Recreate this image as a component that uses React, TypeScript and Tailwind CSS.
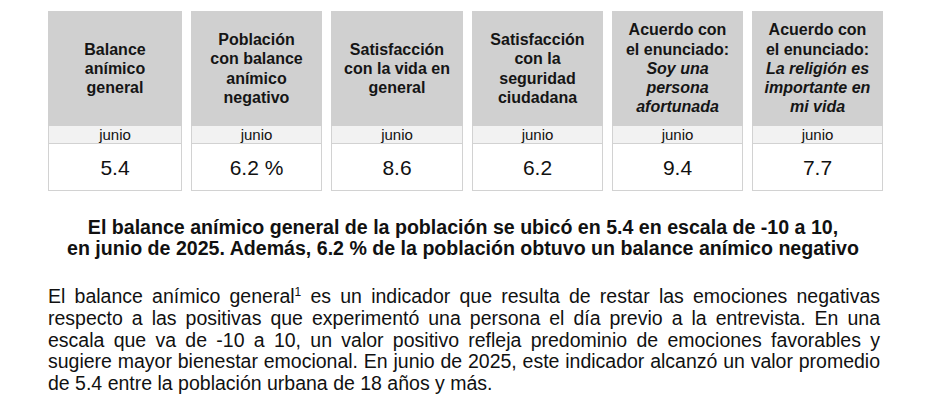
import React from "react";

type Card = { w: string; title: React.ReactNode; value: string };

const cards: Card[] = [
  { w: "w-[134px]", title: <>Balance<br />anímico<br />general</>, value: "5.4" },
  { w: "w-[131px]", title: <>Población<br />con balance<br />anímico<br />negativo</>, value: "6.2 %" },
  { w: "w-[132px]", title: <>Satisfacción<br />con la vida en<br />general</>, value: "8.6" },
  { w: "w-[131px]", title: <>Satisfacción<br />con la<br />seguridad<br />ciudadana</>, value: "6.2" },
  {
    w: "w-[131px]",
    title: <>Acuerdo con<br />el enunciado:<br /><i>Soy una<br />persona<br />afortunada</i></>,
    value: "9.4",
  },
  {
    w: "w-[131px]",
    title: <>Acuerdo con<br />el enunciado:<br /><i>La religión es<br />importante en<br />mi vida</i></>,
    value: "7.7",
  },
];

export default function App() {
  return (
    <div className="w-[926px] h-[417px] bg-white overflow-hidden text-[#111] [font-family:'Liberation_Sans',Arial,sans-serif]">
      <div className="flex gap-[9px] pl-[48px] pt-[11px]">
        {cards.map((c, i) => (
          <div key={i} className={`${c.w} flex flex-col`}>
            <div className="h-[115px] bg-[#d0d0d0] flex items-center justify-center text-center font-bold text-[16px] leading-[19.2px] text-[#151515]">
              <div>{c.title}</div>
            </div>
            <div className="border border-t-0 border-[#d2d2d2]">
              <div className="h-[18px] bg-[#f2f2f2] border-b border-[#d2d2d2] flex items-center justify-center text-[15px] leading-none">
                junio
              </div>
              <div className="h-[46px] flex items-center justify-center text-[21px] leading-none">
                {c.value}
              </div>
            </div>
          </div>
        ))}
      </div>

      <div className="mt-[26px] text-center font-bold text-[19.6px] leading-[21px]">
        El balance anímico general de la población se ubicó en 5.4 en escala de -10 a 10,
        <br />
        en junio de 2025. Además, 6.2 % de la población obtuvo un balance anímico negativo
      </div>

      <div className="mt-[27px] ml-[48px] w-[832px] text-[19.5px] leading-[21.75px]">
        <div className="text-justify [text-align-last:justify]">
          El balance anímico general<sup className="text-[12px] -top-[7px]">1</sup> es un indicador que resulta de restar las emociones negativas
        </div>
        <div className="text-justify [text-align-last:justify]">
          respecto a las positivas que experimentó una persona el día previo a la entrevista. En una
        </div>
        <div className="text-justify [text-align-last:justify]">
          escala que va de -10 a 10, un valor positivo refleja predominio de emociones favorables y
        </div>
        <div className="text-justify [text-align-last:justify] whitespace-nowrap">
          sugiere mayor bienestar emocional. En junio de 2025, este indicador alcanzó un valor promedio
        </div>
        <div>de 5.4 entre la población urbana de 18 años y más.</div>
      </div>
    </div>
  );
}
